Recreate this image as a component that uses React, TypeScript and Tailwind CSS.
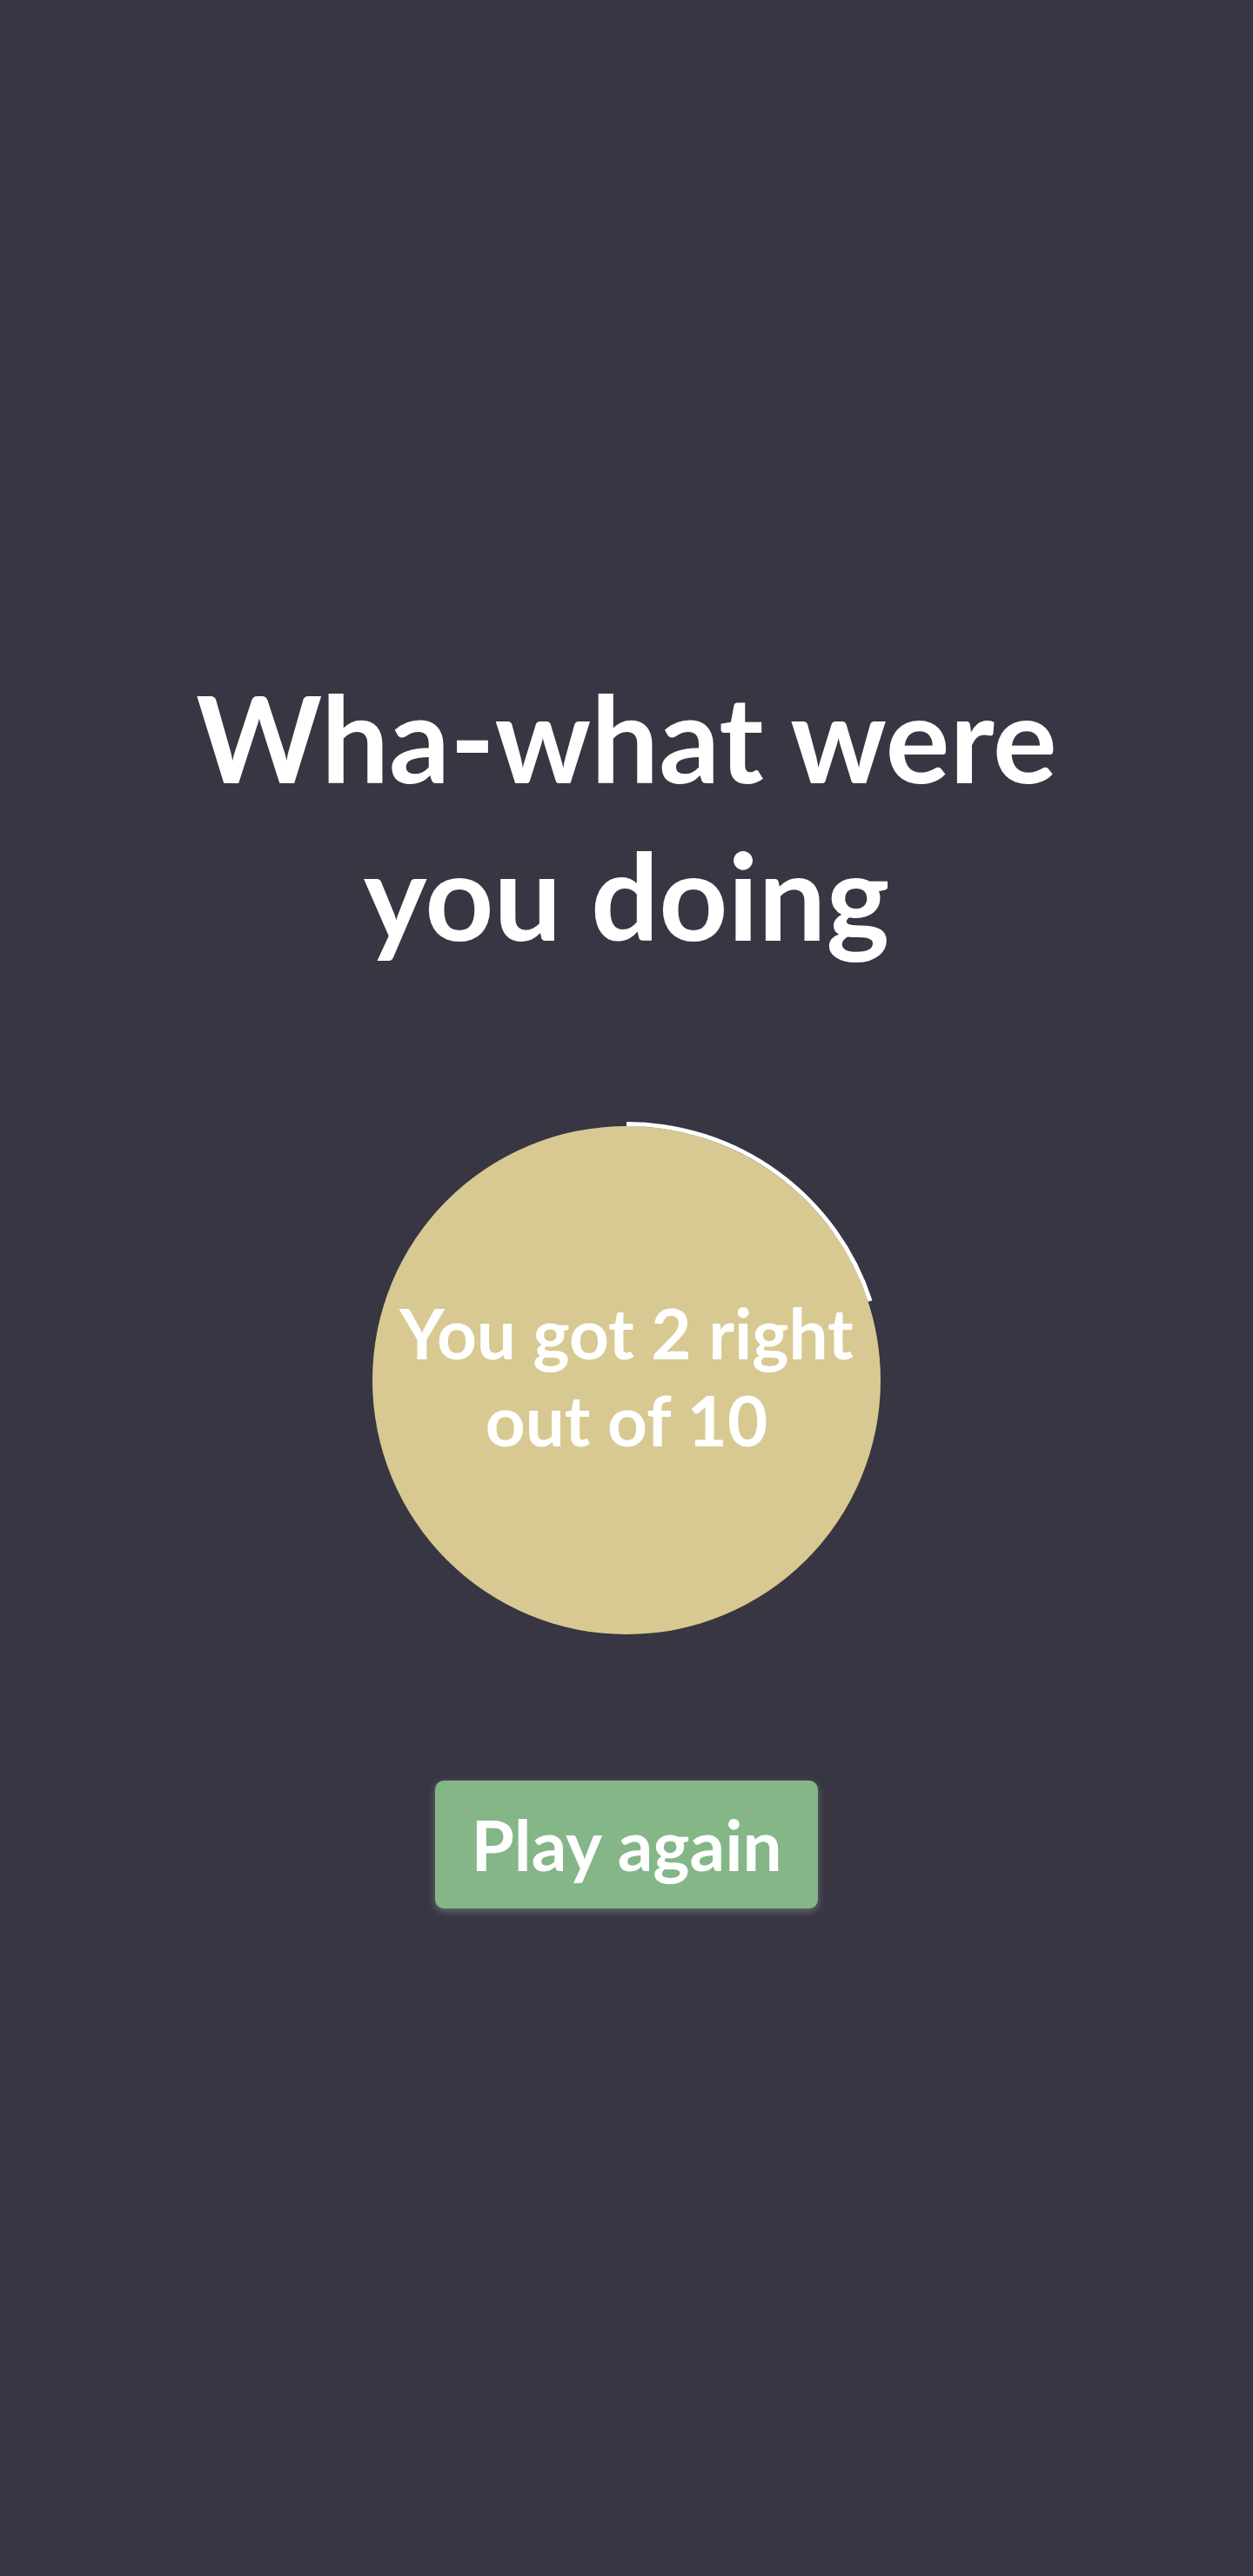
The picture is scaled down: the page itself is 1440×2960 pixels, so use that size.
const score = 2;
const total = 10;

function ScoreRing({ value, max }: { value: number; max: number }) {
  const size = 600;
  const c = size / 2;
  const r = 294.5;
  const angle = (value / max) * 2 * Math.PI;
  const x = c + r * Math.sin(angle);
  const y = c - r * Math.cos(angle);
  const large = angle > Math.PI ? 1 : 0;

  return (
    <div className="relative flex h-[600px] w-[600px] items-center justify-center">
      <svg
        width={size}
        height={size}
        viewBox={`0 0 ${size} ${size}`}
        className="absolute inset-0"
      >
        <circle cx={c} cy={c} r={292} fill="#d7c991" />
        <path
          d={`M ${c} ${c - r} A ${r} ${r} 0 ${large} 1 ${x} ${y}`}
          fill="none"
          stroke="#ffffff"
          strokeWidth={5}
        />
      </svg>
      <p className="relative pb-[10px] text-center text-[80px] leading-[100px] font-bold text-white">
        You got {value} right
        <br />
        out of {max}
      </p>
    </div>
  );
}

export default function App() {
  return (
    <div className="flex min-h-screen flex-col items-center justify-center gap-[160px] bg-[#373642] pb-[12px] font-['Lato',sans-serif]">
      <h1 className="mb-[8px] text-center text-[138px] leading-[181px] font-bold text-white">
        Wha-what were
        <br />
        you doing
      </h1>

      <ScoreRing value={score} max={total} />

      <button className="h-[147px] w-[440px] rounded-[10px] bg-[#84b687] text-[80px] font-bold text-white shadow-[0_3px_10px_rgba(210,210,230,0.35)]">
        Play again
      </button>
    </div>
  );
}
